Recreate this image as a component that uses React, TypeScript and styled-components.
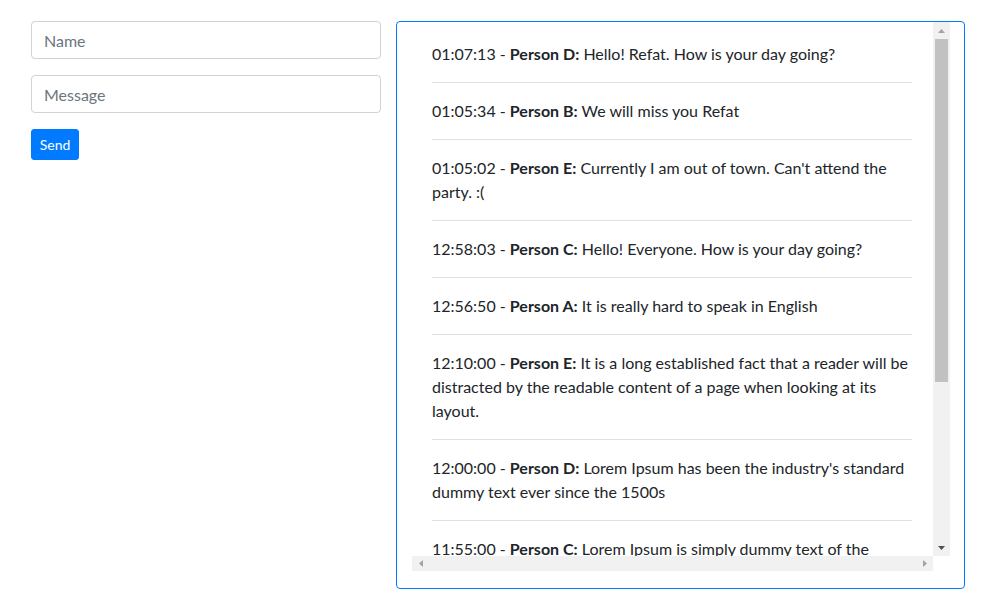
import React from "react";
import styled, { createGlobalStyle } from "styled-components";

const GlobalStyle = createGlobalStyle`
  * { box-sizing: border-box; }
  html, body { margin: 0; padding: 0; background: #fff; }
  body {
    font-family: Lato, "Open Sans", "Noto Sans", sans-serif;
    font-size: 16px;
    line-height: 1.5;
    color: #212529;
  }
`;

const Page = styled.div`
  display: flex;
  align-items: flex-start;
  gap: 15px;
  padding: 21px 25px 0 31px;
`;

const FormColumn = styled.div`
  width: 350px;
  display: flex;
  flex-direction: column;
  align-items: flex-start;
  gap: 16px;
`;

const Input = styled.input`
  width: 100%;
  height: 38px;
  padding: 6px 12px;
  border: 1px solid #ced4da;
  border-radius: 4px;
  font: inherit;
  color: #495057;
  background: #fff;
  outline: none;
  &::placeholder { color: #6c757d; opacity: 1; }
`;

const SendButton = styled.button`
  height: 31px;
  width: 48px;
  padding: 0;
  border: 1px solid #007bff;
  border-radius: 3px;
  background: #007bff;
  color: #fff;
  font: inherit;
  font-size: 14px;
  line-height: 21px;
`;

const Panel = styled.div`
  width: 569px;
  height: 568px;
  border: 1px solid #007bff;
  border-radius: 4px;
  padding: 0 14px 17px 15px;
  display: flex;
`;

const ScrollFrame = styled.div`
  flex: 1;
  display: grid;
  grid-template-columns: 1fr 17px;
  grid-template-rows: 1fr 15px;
  min-height: 0;
`;

const Viewport = styled.div`
  overflow: hidden;
  min-width: 0;
  min-height: 0;
`;

const List = styled.ul`
  list-style: none;
  margin: 0;
  padding: 4px 21px 0 20px;
`;

const Item = styled.li`
  padding: 16px 0;
  border-bottom: 1px solid #dee2e6;
  line-height: 24px;
`;

const Name = styled.b`
  font-weight: 700;
`;

const VTrack = styled.div`
  background: #f1f1f1;
  display: flex;
  flex-direction: column;
  align-items: center;
`;

const ArrowCell = styled.div<{ $h: number }>`
  height: ${(p) => p.$h}px;
  width: 100%;
  display: flex;
  align-items: center;
  justify-content: center;
  flex: none;
`;

const VThumb = styled.div`
  width: 13px;
  height: 343px;
  background: #c1c1c1;
  flex: none;
`;

const Spacer = styled.div`
  flex: 1;
`;

const HTrack = styled.div`
  background: #f1f1f1;
  display: flex;
  align-items: center;
  justify-content: space-between;
`;

const Corner = styled.div`
  background: #fff;
`;

const Tri = ({ dir, color }: { dir: "up" | "down" | "left" | "right"; color: string }) => {
  const pts: Record<string, string> = {
    up: "0,4 7,4 3.5,0",
    down: "0,0 7,0 3.5,4",
    left: "4,0 4,7 0,3.5",
    right: "0,0 0,7 4,3.5",
  };
  const vertical = dir === "up" || dir === "down";
  return (
    <svg width={vertical ? 7 : 4} height={vertical ? 4 : 7} viewBox={vertical ? "0 0 7 4" : "0 0 4 7"}>
      <polygon points={pts[dir]} fill={color} />
    </svg>
  );
};

const HArrow = styled.div`
  width: 17px;
  height: 15px;
  display: flex;
  align-items: center;
  justify-content: center;
`;

const messages: { time: string; person: string; text: string }[] = [
  { time: "01:07:13", person: "Person D:", text: "Hello! Refat. How is your day going?" },
  { time: "01:05:34", person: "Person B:", text: "We will miss you Refat" },
  { time: "01:05:02", person: "Person E:", text: "Currently I am out of town. Can't attend the party. :(" },
  { time: "12:58:03", person: "Person C:", text: "Hello! Everyone. How is your day going?" },
  { time: "12:56:50", person: "Person A:", text: "It is really hard to speak in English" },
  {
    time: "12:10:00",
    person: "Person E:",
    text: "It is a long established fact that a reader will be distracted by the readable content of a page when looking at its layout.",
  },
  {
    time: "12:00:00",
    person: "Person D:",
    text: "Lorem Ipsum has been the industry's standard dummy text ever since the 1500s",
  },
  {
    time: "11:55:00",
    person: "Person C:",
    text: "Lorem Ipsum is simply dummy text of the printing and typesetting industry.",
  },
];

export default function App() {
  return (
    <>
      <GlobalStyle />
      <Page>
        <FormColumn>
          <Input placeholder="Name" />
          <Input placeholder="Message" />
          <SendButton>Send</SendButton>
        </FormColumn>
        <Panel>
          <ScrollFrame>
            <Viewport>
              <List>
                {messages.map((m) => (
                  <Item key={m.time}>
                    {m.time} - <Name>{m.person}</Name> {m.text}
                  </Item>
                ))}
              </List>
            </Viewport>
            <VTrack>
              <ArrowCell $h={17}>
                <Tri dir="up" color="#a3a3a3" />
              </ArrowCell>
              <VThumb />
              <Spacer />
              <ArrowCell $h={17}>
                <Tri dir="down" color="#505050" />
              </ArrowCell>
            </VTrack>
            <HTrack>
              <HArrow>
                <Tri dir="left" color="#a3a3a3" />
              </HArrow>
              <HArrow>
                <Tri dir="right" color="#a3a3a3" />
              </HArrow>
            </HTrack>
            <Corner />
          </ScrollFrame>
        </Panel>
      </Page>
    </>
  );
}
